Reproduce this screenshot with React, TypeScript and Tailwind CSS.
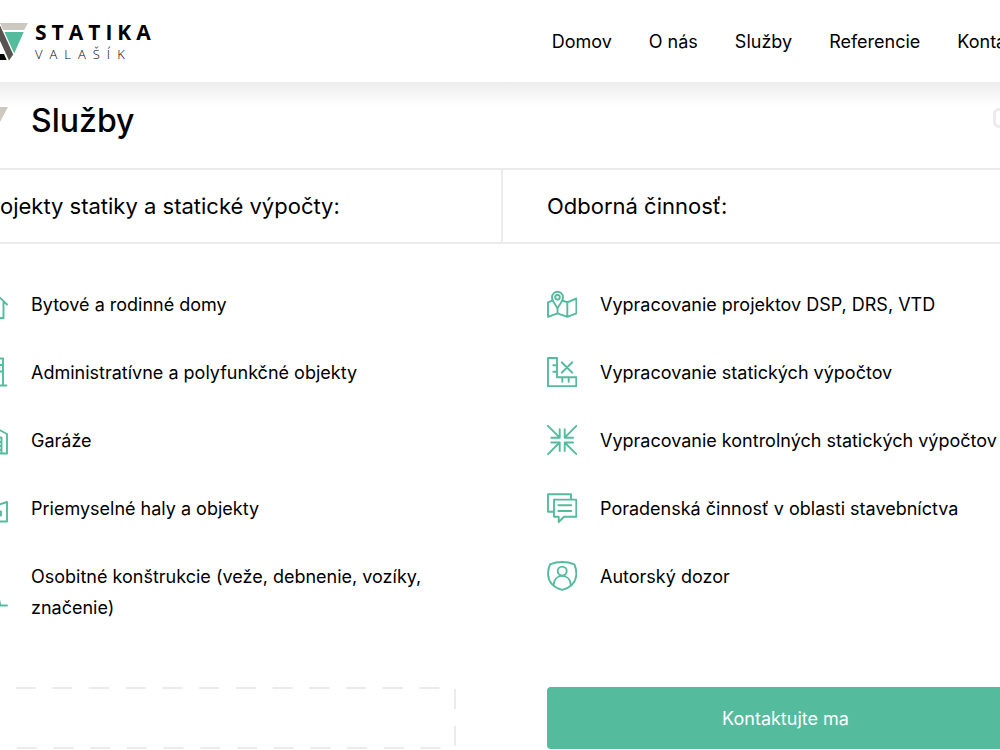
import type { ReactNode } from 'react';

type Service = { label: string; icon: ReactNode };

const navItems = [
  { label: 'Domov', href: '#domov' },
  { label: 'O nás', href: '#o-nas' },
  { label: 'Služby', href: '#sluzby' },
  { label: 'Referencie', href: '#referencie' },
  { label: 'Kontakt', href: '#kontakt' },
];

const projects: Service[] = [
  {
    label: 'Bytové a rodinné domy',
    icon: <path d="M1 15.5 15 2l14 13.5M4.5 12v17h21V12M11.5 29V18h7v11" />,
  },
  {
    label: 'Administratívne a polyfunkčné objekty',
    icon: <path d="M1.5 28.5h27M5 28.5v-27h20v27M9.5 8h4M19.5 8h4M9.5 14.5h4M19.5 14.5h4M12 28.5V21h6v7.500" />,
  },
  {
    label: 'Garáže',
    icon: <path d="M1 28.500V9l14-7.500L29 9v19.500H1ZM6.500 28.500V12.500h17v16M6.500 17h17M6.500 21h17M6.500 25h17" />,
  },
  {
    label: 'Priemyselné haly a objekty',
    icon: <path d="M1 28.500V3h5v10l10-4v4l13-4v19.500H1ZM8 18.500h4v4H8ZM18.500 18.500h4.500v4h-4.500Z" />,
  },
  {
    label: 'Osobitné konštrukcie (veže, debnenie, vozíky, značenie)',
    icon: <path d="M1 28.500h28M7 28.500l6-21h4l5.500 21M15 1v6.500M9 21h12M11 14h8" />,
  },
];

const expertise: Service[] = [
  {
    label: 'Vypracovanie projektov DSP, DRS, VTD',
    icon: (
      <>
        <path d="M5.300 11.700 1 13.300v14.500l9.500-3.500 9.800 3.500 9.100-3.500V9.500l-9.100 3.800-4.800-1.800M10.500 19v5.300M20.300 13.300v14.500" />
        <path d="M10.500 19C7.500 14.500 5 11.800 5 8.300a5.500 5.500 0 0 1 11 0c0 3.500-2.500 6.200-5.500 10.700Z" />
        <circle cx="10.500" cy="8.300" r="2.300" />
      </>
    ),
  },
  {
    label: 'Vypracovanie statických výpočtov',
    icon: <path d="M1 1h9v19.300h19.300v9H1ZM6.300 8.300H10M6.300 14.700H10M15.300 20.300v4.400M21.700 20.300v4.400M14.700 5.300l10.600 10.400M25.300 5.300 14.700 15.700" />,
  },
  {
    label: 'Vypracovanie kontrolných statických výpočtov',
    icon: (
      <path d="m1 .8 11.700 11.900M12.700 4.300v8.400H4.300M29.400.8 17.700 12.700M17.700 4.300v8.400h8.400M1 29.200l11.700-11.700M12.700 25.900v-8.400H4.300M29.400 29.200 17.700 17.500M17.700 25.900v-8.400h8.400" />
    ),
  },
  {
    label: 'Poradenská činnosť v oblasti stavebníctva',
    icon: <path d="M7 18.700H1V1.200h23v5.300M7 6.600h22.300v17.200H17L11.700 29v-5.200H7ZM11.300 12.200h13M11.300 18h13" />,
  },
  {
    label: 'Autorský dozor',
    icon: (
      <>
        <path d="M15.200 1C10.500 1 6.500 1.900 3 3.300 1.500 7 .8 10.500 1.100 14c.6 7.300 6 12.600 14.100 14.900C23.300 26.600 28.700 21.300 29.300 14c.3-3.500-.4-7-1.900-10.700C23.900 1.900 19.900 1 15.200 1Z" />
        <circle cx="15.200" cy="10.100" r="4.500" />
        <path d="M6.600 23.700c.5-5.300 3.800-8.800 8.600-8.800s8.100 3.500 8.600 8.800" />
      </>
    ),
  },
];

function ServiceList({ items }: { items: Service[] }) {
  return (
    <ul className="flex flex-col gap-[37px]">
      {items.map((item) => (
        <li key={item.label} className="flex items-center gap-[23px] text-[18px] leading-[31px]">
          <svg
            viewBox="0 0 30 30"
            aria-hidden="true"
            className="mb-px size-[30px] shrink-0 fill-none stroke-[#55bb9d] stroke-[1.9]"
            strokeLinecap="round"
            strokeLinejoin="round"
          >
            {item.icon}
          </svg>
          <span>{item.label}</span>
        </li>
      ))}
    </ul>
  );
}

function Logo() {
  return (
    <a href="#domov" aria-label="Statika Valašík" className="flex items-center gap-[7px]">
      <svg viewBox="0 0 50 38" aria-hidden="true" className="h-[38px] w-[50px] shrink-0">
        <path d="M22 0h28l-3.800 7H25.200Z" fill="#cdc9c1" />
        <path d="M26.500 9h19.200L36.200 30.500Z" fill="#55bb9d" />
        <path d="M14 0h7l14.200 31.500L31 37.500 14 0Z" fill="#575350" />
        <path d="M12 0 0 37h28.700l-2.700-6H8.500L16 9Z" fill="#000" />
      </svg>
      <span className="flex flex-col pt-[2px] font-['Open_Sans',sans-serif]">
        <span className="text-[21px] leading-[22px] font-bold tracking-[5px]">STATIKA</span>
        <span className="text-[13px] leading-[22px] font-light tracking-[7px]">VALAŠÍK</span>
      </span>
    </a>
  );
}

export default function App() {
  return (
    <div className="overflow-hidden bg-white font-['Inter','Noto_Sans',sans-serif] font-normal text-black">
      <header className="relative">
        <div className="-mx-[22px] flex h-[82px] items-center justify-between pt-[2px]">
          <Logo />
          <nav aria-label="Hlavné menu" className="flex gap-[37px] text-[18px] leading-6 whitespace-nowrap">
            {navItems.map((item) => (
              <a key={item.label} href={item.href}>
                {item.label}
              </a>
            ))}
          </nav>
        </div>
        <div className="absolute inset-x-0 top-full h-6 bg-linear-to-b from-[#ececec] to-white" />
      </header>

      <main>
        <div className="relative -mr-6 -ml-[22px] flex h-[86px] items-center justify-between pb-2">
          <div className="flex items-center gap-[23px]">
            <svg viewBox="0 0 30 28" aria-hidden="true" className="h-[28px] w-[30px] shrink-0">
              <path d="M0 0h30L15 28Z" fill="#cdc9c1" />
            </svg>
            <h1 className="text-[32px] leading-10 font-medium">Služby</h1>
          </div>
          <div className="mb-[6px] h-5 w-[31px] rounded-md border-3 border-[#ebebeb]" />
        </div>

        <div className="-mr-6 -ml-[22px] grid grid-cols-2 border-y-2 border-[#ebebeb] text-[22px] leading-[72px] whitespace-nowrap">
          <h2>Projekty statiky a statické výpočty:</h2>
          <h2 className="border-l-2 border-[#ebebeb] pl-[44px]">Odborná činnosť:</h2>
        </div>

        <div className="-mr-6 -ml-[22px] grid grid-cols-2 gap-x-[92px] pt-[45px]">
          <ServiceList items={projects} />
          <ServiceList items={expertise} />
        </div>

        <div className="-mr-6 -ml-[22px] grid grid-cols-2 gap-x-[92px] pt-16">
          <svg aria-hidden="true" className="h-[62px] w-full overflow-visible">
            <rect
              x="1"
              y="1"
              width="476"
              height="60"
              fill="none"
              stroke="#ebebeb"
              strokeWidth="2"
              strokeDasharray="20 16.700"
            />
          </svg>
          <a
            href="#kontakt"
            className="flex h-[62px] items-center justify-center rounded bg-[#55bb9d] text-[18px] text-white"
          >
            Kontaktujte ma
          </a>
        </div>
      </main>
    </div>
  );
}
